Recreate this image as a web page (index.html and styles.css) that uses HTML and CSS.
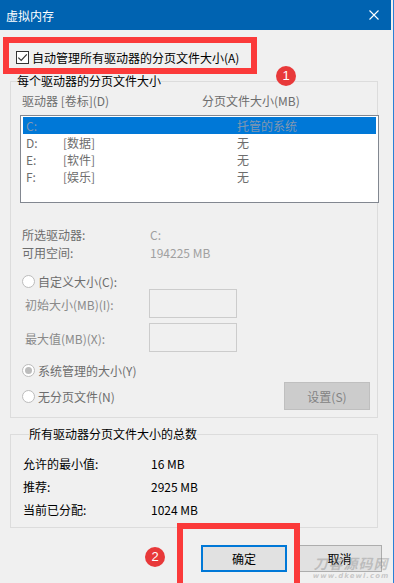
FILE: index.html
```html
<!DOCTYPE html>
<html lang="zh-CN">
<head>
  <meta charset="UTF-8">
  <title>虚拟内存</title>
  <meta name="viewport" content="width=device-width, initial-scale=1.0">
  <link rel="stylesheet" href="styles.css">
</head>
<body>

<div class="window">

  <!-- Title bar -->
  <div class="titlebar">
    <span class="title">虚拟内存</span>
    <svg class="close" width="10" height="10" viewBox="0 0 10 10">
      <path d="M0.5 0.5L9.5 9.5M9.5 0.5L0.5 9.5" stroke="#fff" stroke-width="1.1"/>
    </svg>
  </div>

  <!-- Auto manage -->
  <div class="auto-row">
    <span class="checkbox">
      <svg width="11" height="11" viewBox="0 0 11 11">
        <path d="M1.3 5.6L4.2 8.4L9.8 2.3" fill="none" stroke="#333" stroke-width="1.2"/>
      </svg>
    </span>
    <span>自动管理所有驱动器的分页文件大小(A)</span>
  </div>

  <!-- Per drive -->
  <fieldset class="group group-drives">
    <legend>每个驱动器的分页文件大小</legend>
    <div class="cols">
      <span class="col-drive">驱动器 [卷标](D)</span>
      <span>分页文件大小(MB)</span>
    </div>
    <div class="drive-list">
      <div class="drive-row selected"><span class="d-letter">C:</span><span class="d-label"></span><span>托管的系统</span></div>
      <div class="drive-row"><span class="d-letter">D:</span><span class="d-label">[数据]</span><span>无</span></div>
      <div class="drive-row"><span class="d-letter">E:</span><span class="d-label">[软件]</span><span>无</span></div>
      <div class="drive-row"><span class="d-letter">F:</span><span class="d-label">[娱乐]</span><span>无</span></div>
    </div>

    <div class="info-row first"><span class="info-key">所选驱动器:</span><span class="info-val">C:</span></div>
    <div class="info-row"><span class="info-key">可用空间:</span><span class="info-val">194225 MB</span></div>

    <div class="radio-row custom"><span class="radio"></span>自定义大小(C):</div>
    <div class="size-row"><span class="size-key">初始大小(MB)(I):</span><span class="size-input"></span></div>
    <div class="size-row second"><span class="size-key">最大值(MB)(X):</span><span class="size-input"></span></div>
    <div class="radio-row system"><span class="radio checked"></span>系统管理的大小(Y)</div>
    <div class="radio-row none"><span class="radio"></span>无分页文件(N)<button class="set-btn" disabled>设置(S)</button></div>
  </fieldset>

  <!-- Totals -->
  <fieldset class="group group-total">
    <legend>所有驱动器分页文件大小的总数</legend>
    <div class="total-row first"><span class="total-key">允许的最小值:</span><span>16 MB</span></div>
    <div class="total-row"><span class="total-key">推荐:</span><span>2925 MB</span></div>
    <div class="total-row"><span class="total-key">当前已分配:</span><span>1024 MB</span></div>
  </fieldset>

  <div class="actions">
    <button class="btn btn-ok">确定</button>
    <button class="btn">取消</button>
  </div>

  <!-- Annotations -->
  <div class="mark mark-1"></div>
  <span class="badge badge-1">1</span>
  <div class="mark mark-2"></div>
  <span class="badge badge-2">2</span>
  <div class="watermark"><b>刀客源码网</b><small>www.dkewl.com</small></div>
</div>

</body>
</html>
```

FILE: styles.css
```css
body {
  margin: 0;
  background: #f0f0f0;
  font-family: "Noto Sans CJK SC", "Noto Sans", sans-serif;
  font-size: 12px;
  color: #000;
}

.window {
  position: relative;
  width: 393px;
  height: 583px;
  background: #f0f0f0;
  border-right: 1px solid #2a80d6;
  overflow: hidden;
}

/* Title bar */
.titlebar {
  height: 30px;
  background: #0063b1;
  color: #fff;
  display: flex;
  align-items: center;
  justify-content: space-between;
  padding: 0 12px 0 6px;
  margin-right: 2px;
}
.close { display: block; }

/* Auto manage checkbox */
.auto-row {
  display: flex;
  align-items: center;
  gap: 3px;
  height: 16px;
  margin-top: 19px;
  padding-left: 16px;
}
.checkbox {
  width: 11px;
  height: 11px;
  border: 1px solid #333;
  background: #fff;
  display: flex;
}

/* Group boxes */
.group {
  box-sizing: border-box;
  width: 368px;
  min-width: 0;
  margin: 8px 0 0 10px;
  padding: 0;
  border: 1px solid #dcdcdc;
}
.group legend {
  margin-left: 6px;
  padding: 0;
  line-height: 16px;
}
.group-drives { padding-bottom: 7px; }
.group-total { padding: 0 0 6px 12px; }

.cols {
  display: flex;
  height: 16px;
  line-height: 16px;
  margin: 4px 0 0 11px;
  color: #6d6d6d;
}
.col-drive { width: 180px; }

/* Drive list */
.drive-list {
  box-sizing: border-box;
  width: 359px;
  height: 88px;
  margin: 6px 0 0 9px;
  padding: 1px;
  border: 1px solid #828790;
  background: #fff;
}
.drive-row {
  display: flex;
  height: 17px;
  line-height: 17px;
  margin: 0 1px;
  padding-left: 3px;
  color: #6d6d6d;
}
.drive-row.selected {
  background: #0078d7;
  color: #8197b0;
}
.d-letter { width: 37px; }
.d-label { width: 174px; }

/* Selected drive info */
.info-row {
  display: flex;
  height: 18px;
  line-height: 18px;
  margin-left: 11px;
}
.info-row.first { margin-top: 23px; }
.info-key { width: 128px; color: #6d6d6d; }
.info-val { color: #a0a0a0; }

/* Radios */
.radio-row {
  display: flex;
  align-items: center;
  gap: 3px;
  height: 16px;
  margin-left: 11px;
  color: #6d6d6d;
}
.radio-row.custom { margin-top: 11px; }
.radio-row.system { margin-top: 10px; }
.radio-row.none {
  height: 28px;
  margin-top: 4px;
  padding-right: 7px;
}
.radio {
  box-sizing: border-box;
  width: 13px;
  height: 13px;
  border: 1px solid #bcbcbc;
  border-radius: 50%;
  background: #fff;
  display: flex;
  align-items: center;
  justify-content: center;
}
.radio.checked::after {
  content: "";
  width: 7px;
  height: 7px;
  border-radius: 50%;
  background: #bcbcbc;
}

.size-row {
  display: flex;
  align-items: center;
  height: 29px;
  margin-left: 14px;
  color: #8a8a8a;
}
.size-row.second { margin-top: 5px; }
.size-key { width: 124px; padding-top: 2px; }
.size-input {
  box-sizing: border-box;
  width: 88px;
  height: 29px;
  border: 1px solid #cccccc;
}

.set-btn {
  box-sizing: border-box;
  margin-left: auto;
  width: 86px;
  height: 28px;
  background: #cccccc;
  border: 1px solid #bfbfbf;
  color: #838383;
  font: inherit;
}

/* Totals */
.total-row {
  display: flex;
  height: 23px;
  line-height: 23px;
}
.total-row.first { margin-top: 10px; }
.total-key { width: 128px; }

/* Dialog buttons */
.actions {
  display: flex;
  justify-content: flex-end;
  gap: 10px;
  margin-top: 17px;
  padding-right: 11px;
}
.btn {
  box-sizing: border-box;
  width: 85px;
  height: 27px;
  background: #e1e1e1;
  border: 1px solid #adadad;
  font: inherit;
  color: #000;
}
.btn-ok {
  width: 86px;
  border: 2px solid #0078d7;
}

/* Red annotations */
.mark {
  position: absolute;
  box-sizing: border-box;
  border: 6px solid #fb3a3a;
}
.mark-1 { left: 3px; top: 37px; width: 254px; height: 37px; }
.mark-2 { left: 177px; top: 523px; width: 123px; height: 66px; }

.badge {
  position: absolute;
  width: 20px;
  height: 20px;
  border-radius: 50%;
  background: #e8393a;
  color: #fff;
  font-family: "Liberation Sans", Arial, sans-serif;
  font-size: 13px;
  line-height: 20px;
  text-align: center;
}
.badge-1 { left: 276px; top: 66px; }
.badge-2 { left: 145px; top: 547px; }

.watermark {
  position: absolute;
  left: 312px;
  top: 556px;
  width: 78px;
  display: flex;
  flex-direction: column;
  align-items: center;
  color: rgba(120, 120, 120, 0.35);
  font-style: italic;
  line-height: 1;
}
.watermark b { font-size: 14px; letter-spacing: 1px; }
.watermark small {
  font-family: "DejaVu Sans", sans-serif;
  font-size: 7px;
  font-weight: bold;
  letter-spacing: 1px;
  margin-top: 3px;
}
```
